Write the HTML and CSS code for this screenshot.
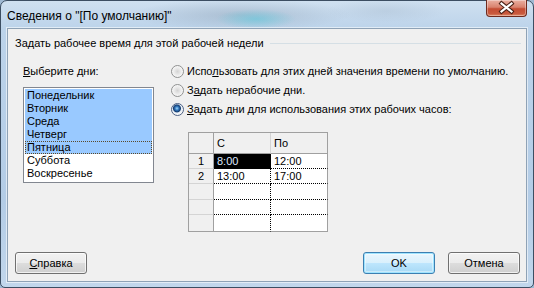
FILE: index.html
```html
<!DOCTYPE html>
<html lang="ru">
<head>
<meta charset="utf-8">
<title>Сведения о "[По умолчанию]"</title>
<link rel="stylesheet" href="styles.css">
</head>
<body>
<div class="window">
  <div class="titlebar">
    <span class="title">Сведения о "[По умолчанию]"</span>
    <div class="close">
      <svg width="41" height="17" viewBox="0 0 41 17">
        <path d="M15.5 4.5 L25.5 12.5 M25.5 4.5 L15.5 12.5" stroke="#4a2218" stroke-width="4.2" stroke-linecap="square" fill="none"/>
        <path d="M15.5 4.5 L25.5 12.5 M25.5 4.5 L15.5 12.5" stroke="#ffffff" stroke-width="2.2" stroke-linecap="square" fill="none"/>
      </svg>
    </div>
  </div>
  <div class="client">
    <div class="group-head"><span>Задать рабочее время для этой рабочей недели</span><span class="rule"></span></div>
    <div class="main">
      <div class="days">
        <div class="label"><u>В</u>ыберите дни:</div>
        <ul class="listbox">
          <li class="sel">Понедельник</li>
          <li class="sel">Вторник</li>
          <li class="sel">Среда</li>
          <li class="sel">Четверг</li>
          <li class="sel focus">Пятница</li>
          <li>Суббота</li>
          <li>Воскресенье</li>
        </ul>
      </div>
      <div class="options">
        <div class="radio"><span class="dot"></span><span>Испо<u>л</u>ьзовать для этих дней значения времени по умолчанию.</span></div>
        <div class="radio"><span class="dot"></span><span>З<u>а</u>дать нерабочие дни.</span></div>
        <div class="radio"><span class="dot checked"></span><span><u>З</u>адать дни для использования этих рабочих часов:</span></div>
        <div class="grid">
          <div class="c hd corner"></div><div class="c hd col">С</div><div class="c hd col last">По</div>
          <div class="c rh">1</div><div class="c d active">8:00</div><div class="c d last">12:00</div>
          <div class="c rh">2</div><div class="c d">13:00</div><div class="c d last">17:00</div>
          <div class="c rh r3"></div><div class="c d r3"></div><div class="c d last r3"></div>
          <div class="c rh"></div><div class="c d"></div><div class="c d last"></div>
          <div class="c rh bottom"></div><div class="c d bottom"></div><div class="c d last bottom"></div>
        </div>
      </div>
    </div>
    <div class="buttons">
      <button class="btn"><u>С</u>правка</button>
      <span class="spacer"></span>
      <button class="btn default">OK</button>
      <button class="btn">Отмена</button>
    </div>
  </div>
</div>
</body>
</html>
```
FILE: styles.css
```css
html, body { margin: 0; padding: 0; }
body { width: 534px; height: 288px; overflow: hidden; background: #9fb9d3; }

.window {
  box-sizing: border-box;
  width: 534px; height: 288px;
  border: 1px solid #3c4e62;
  border-radius: 7px 7px 5px 5px;
  background:
    radial-gradient(ellipse 40px 10px at 255px 18px, rgba(90,200,220,.55), rgba(90,200,220,0)),
    radial-gradient(ellipse 110px 16px at 240px 14px, rgba(120,140,160,.35), rgba(120,140,160,0)),
    radial-gradient(ellipse 60px 12px at 385px 10px, rgba(150,170,190,.25), rgba(150,170,190,0)),
    linear-gradient(to bottom, #cfe0f0 0px, #bcd3ea 28px, #b3cce6 200px, #c2d7ec 288px);
  display: flex; flex-direction: column;
  font-family: "Liberation Sans", Arial, sans-serif;
  font-size: 11px; color: #000;
  position: relative;
}

.titlebar { height: 27px; display: flex; align-items: flex-start; flex: none; }
.title {
  font-family: "Liberation Sans", Arial, sans-serif;
  font-size: 12px; line-height: 14px;
  padding: 8px 0 0 6px;
  color: #000;
}
.close {
  margin-left: auto; margin-right: 6px; margin-top: -1px;
  width: 41px; height: 17px;
  box-sizing: border-box;
  border: 1px solid #6e2a1e; border-top: none;
  border-radius: 0 0 4px 4px;
  background: linear-gradient(to bottom, #eab0a2 0%, #d9826e 45%, #c44c33 55%, #c95a3e 85%, #e08a68 100%);
  box-shadow: inset 0 0 0 1px rgba(255,255,255,.35);
  overflow: hidden;
}
.close svg { display: block; margin: -1px 0 0 -1px; }

.client {
  flex: 1;
  margin: 0 6px 5px 6px;
  background: #f0f0f0;
  border: 1px solid #8ea2b6;
  box-shadow: 0 0 0 1px rgba(255,255,255,.55);
  display: flex; flex-direction: column;
}

.group-head {
  margin: 8px 5px 0 7px;
  height: 13px; line-height: 13px;
  display: flex; align-items: center;
}
.rule { flex: 1; height: 1px; background: #d5dfe5; margin-left: 6px; margin-top: 0; }

.main { display: flex; margin-top: 15px; }
.days { padding-left: 15px; }
.label { height: 13px; line-height: 13px; }
.listbox {
  list-style: none; margin: 9px 0 0 0; padding: 1px;
  box-sizing: border-box;
  width: 131px; height: 96px;
  border: 1px solid #828790;
  background: #fff;
}
.listbox li { height: 13px; line-height: 13px; padding-left: 2px; box-sizing: border-box; }
.listbox li.sel { background: #99c9ff; }
.listbox li.focus { outline: 1px dotted #5a4a2a; outline-offset: -1px; }

.options { margin-left: 17px; display: flex; flex-direction: column; }
.radio { display: flex; align-items: center; height: 13px; line-height: 13px; margin-bottom: 6px; }
.dot {
  width: 13px; height: 13px; box-sizing: border-box;
  border-radius: 50%;
  border: 1px solid #8f9090;
  background: radial-gradient(circle at 50% 50%, #d4d4d4 0, #e8e8e8 3px, #f4f4f4 5px, #fdfdfd 6px);
  margin-right: 3px; flex: none;
}
.dot.checked {
  border-color: #4d6185;
  background: radial-gradient(circle at 45% 40%, #9fd9ff 0, #2f73b8 2px, #163d70 3.5px, #e6eef6 4.5px, #f6f6f6 6px);
}

.grid {
  margin-top: 10px; margin-left: 17px;
  display: grid;
  grid-template-columns: 25px 57px 57px;
  grid-template-rows: 21px 15px 15px 16px 15px 17px;
  border-top: 1px solid #a0a0a0;
  border-left: 1px solid #a0a0a0;
  width: max-content;
  background: #fff;
}
.c { box-sizing: border-box; line-height: 14px; padding-left: 3px; white-space: nowrap; overflow: hidden; }
.hd { background: #f0f0f0; border-bottom: 1px solid #a0a0a0; border-right: 1px solid #d4d4d4; line-height: 20px; }
.hd.last { border-right: 1px solid #a0a0a0; }
.corner { border-right: 1px solid #a0a0a0; }
.rh { background: #f0f0f0; border-right: 1px solid #a0a0a0; border-bottom: 1px solid #d4d4d4; text-align: center; padding-left: 0; }
.d { border-right: 1px dotted #000; border-bottom: 1px dotted #000; }
.d.last { border-right: 1px solid #a0a0a0; }
.bottom { border-bottom: 1px solid #a0a0a0; }
.active { background: #000; color: #dfe8ff; }
.r3 { line-height: 15px; }

.buttons { margin-top: auto; display: flex; padding: 0 6px 7px 7px; }
.spacer { flex: 1; }
.btn {
  width: 72px; height: 22px; box-sizing: border-box;
  font-family: "Liberation Sans", Arial, sans-serif; font-size: 11px; color: #000;
  border: 1px solid #707070; border-radius: 3px;
  background: linear-gradient(to bottom, #f2f2f2 0%, #ebebeb 50%, #dddddd 50%, #cfcfcf 100%);
  box-shadow: inset 0 0 0 1px rgba(255,255,255,.7);
  padding: 0; margin: 0;
}
.btn + .btn { margin-left: 13px; }
.btn.default {
  border-color: #3c7fb1;
  background: linear-gradient(to bottom, #eaf6fd 0%, #d9f0fc 50%, #bee6fd 50%, #a7d9f5 100%);
  box-shadow: inset 0 0 0 1px #9fe4ff, inset 0 0 0 2px rgba(255,255,255,.4);
}
```
